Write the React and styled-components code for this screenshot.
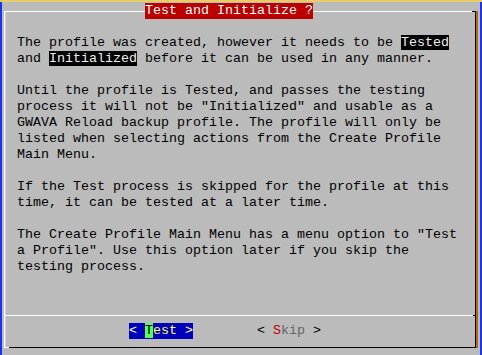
import React from "react";
import styled, { createGlobalStyle } from "styled-components";

const Global = createGlobalStyle`
  html, body { margin: 0; padding: 0; background: #bbbbbb; }
  body { width: 482px; height: 355px; overflow: hidden; }
`;

const Screen = styled.div`
  width: 482px;
  height: 355px;
  display: flex;
  flex-direction: column;
  font-family: "Liberation Mono", "DejaVu Sans Mono", monospace;
  font-size: 13.3333px;
  line-height: 16px;
`;

const TopStrip = styled.div`
  flex: none;
  height: 2px;
  background: #e6cd6a;
`;

const Main = styled.div`
  flex: 1;
  display: flex;
  min-height: 0;
`;

const SideStrip = styled.div`
  flex: none;
  width: 2px;
  background: #1a34ee;
`;

const Canvas = styled.div`
  flex: 1;
  display: flex;
  flex-direction: column;
  padding: 9px 4px 7px 2px;
  background: #bbbbbb;
`;

const DialogBox = styled.div`
  position: relative;
  flex: 1;
  display: flex;
  flex-direction: column;
  border-style: solid;
  border-width: 1px;
  border-color: #ffffff #000000 #000000 #ffffff;
  box-shadow: 2px 0 0 #b8660e, inset 1px 0 0 #d9d0c6;

  &::before {
    content: "";
    position: absolute;
    top: -1px;
    right: -1px;
    width: 4px;
    height: 1px;
    background: #000000;
  }

  &::after {
    content: "";
    position: absolute;
    bottom: -1px;
    left: -1px;
    width: 5px;
    height: 1px;
    background: #ffffff;
  }
`;

const Title = styled.div`
  position: absolute;
  top: -9px;
  left: 140px;
  height: 16px;
  white-space: pre;
  background: #bb0000;
  color: #ffffff;
`;

const Body = styled.div`
  padding: 23px 0 0 12px;
  color: #000000;
`;

const Line = styled.div`
  height: 16px;
  white-space: pre;
`;

const Mark = styled.span`
  background: #000000;
  color: #f0f0f0;
`;

const Separator = styled.div`
  margin-top: 40px;
  height: 1px;
  background: linear-gradient(
    to right,
    #ffffff calc(100% - 2px),
    #000000 calc(100% - 2px)
  );
`;

const ButtonRow = styled.div`
  display: flex;
  gap: 64px;
  margin-top: 7px;
  padding-left: 124px;
  height: 16px;
`;

const Button = styled.div`
  height: 16px;
  white-space: pre;
  background: ${(p) => (p.$selected ? "#0000bb" : "transparent")};
`;

const Bracket = styled.span`
  color: ${(p) => (p.$selected ? "#ffffff" : "#000000")};
`;

const Hot = styled.span`
  color: ${(p) => (p.$selected ? "#000000" : "#bb0000")};
  background: ${(p) => (p.$selected ? "#55ff55" : "transparent")};
`;

const Label = styled.span`
  color: ${(p) => (p.$selected ? "#ffff55" : "#666666")};
`;

function DialogButton({ selected, hot, rest }) {
  return (
    <Button $selected={selected}>
      <Bracket $selected={selected}>{"<"}</Bracket>{" "}
      <Hot $selected={selected}>{hot}</Hot>
      <Label $selected={selected}>{rest}</Label>{" "}
      <Bracket $selected={selected}>{">"}</Bracket>
    </Button>
  );
}

export default function App() {
  return (
    <>
      <Global />
      <Screen>
        <TopStrip />
        <Main>
          <SideStrip />
          <Canvas>
            <DialogBox>
              <Title>Test and Initialize ?</Title>
              <Body>
                <Line>
                  The profile was created, however it needs to be <Mark>Tested</Mark>
                </Line>
                <Line>
                  and <Mark>Initialized</Mark> before it can be used in any manner.
                </Line>
                <Line />
                <Line>Until the profile is Tested, and passes the testing</Line>
                <Line>process it will not be "Initialized" and usable as a</Line>
                <Line>GWAVA Reload backup profile. The profile will only be</Line>
                <Line>listed when selecting actions from the Create Profile</Line>
                <Line>Main Menu.</Line>
                <Line />
                <Line>If the Test process is skipped for the profile at this</Line>
                <Line>time, it can be tested at a later time.</Line>
                <Line />
                <Line>The Create Profile Main Menu has a menu option to "Test</Line>
                <Line>a Profile". Use this option later if you skip the</Line>
                <Line>testing process.</Line>
              </Body>
              <Separator />
              <ButtonRow>
                <DialogButton selected hot="T" rest="est" />
                <DialogButton hot="S" rest="kip" />
              </ButtonRow>
            </DialogBox>
          </Canvas>
          <SideStrip />
        </Main>
      </Screen>
    </>
  );
}
